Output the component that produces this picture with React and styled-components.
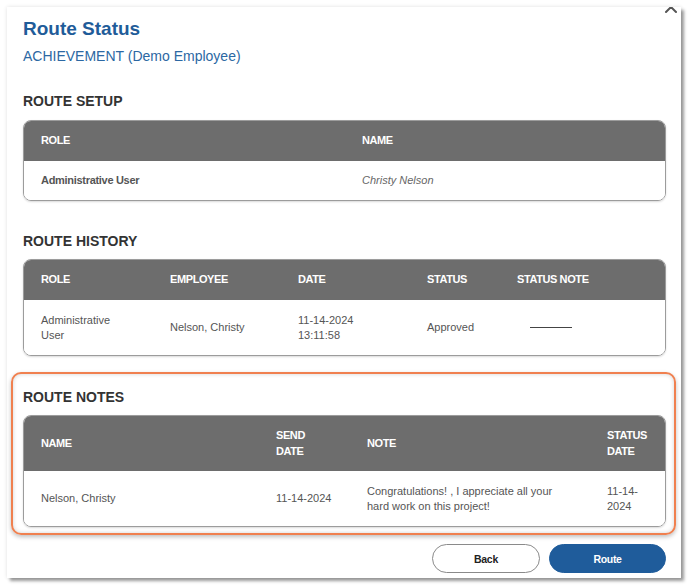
import styled, { createGlobalStyle } from "styled-components";

const Global = createGlobalStyle`
  body {
    margin: 0;
    background: #ffffff;
    font-family: "Liberation Sans", Arial, sans-serif;
  }
`;

const Page = styled.div`
  padding: 7px;
`;

const Modal = styled.div`
  position: relative;
  width: 674px;
  box-sizing: border-box;
  background: #fff;
  overflow: hidden;
  padding: 10px 15px 5px 16px;
  box-shadow: 3px 3px 3px rgba(0, 0, 0, 0.38), 0 0 4px rgba(0, 0, 0, 0.12);
  display: flex;
  flex-direction: column;
`;

const Close = styled.button`
  position: absolute;
  top: -7px;
  right: 3px;
  width: 14px;
  height: 14px;
  padding: 0;
  border: none;
  background: none;
  svg {
    display: block;
  }
`;

const Title = styled.h1`
  margin: 0;
  font-size: 19px;
  line-height: 24px;
  font-weight: bold;
  color: #1f5c99;
`;

const Subtitle = styled.div`
  margin-top: 6px;
  font-size: 14px;
  line-height: 18px;
  color: #2c68a3;
`;

const SectionHead = styled.h2`
  margin: ${({ $top }) => $top}px 0 0 0;
  font-size: 14px;
  line-height: 18px;
  font-weight: bold;
  color: #333;
`;

const Highlight = styled.div`
  margin: 16px -10px 0 -12px;
  padding: 0 8px 6px 10px;
  border: 2px solid #f0804f;
  border-radius: 10px;
  box-shadow: 0 2px 4px rgba(0, 0, 0, 0.25), inset 0 0 4px rgba(0, 0, 0, 0.18);
`;

const Table = styled.div`
  margin-top: ${({ $top }) => $top}px;
  border: 1px solid #9c9c9c;
  border-radius: 8px;
  overflow: hidden;
  box-shadow: 0 1px 2px rgba(0, 0, 0, 0.15);
`;

const Row = styled.div`
  display: grid;
  grid-template-columns: ${({ $cols }) => $cols};
  height: ${({ $h }) => $h}px;
  align-items: center;
  background: ${({ $head }) => ($head ? "#6d6d6d" : "#fff")};
  color: ${({ $head }) => ($head ? "#fff" : "#555")};
  font-size: 11px;
  line-height: ${({ $head }) => ($head ? 16 : 15)}px;
  font-weight: ${({ $head }) => ($head ? "bold" : "normal")};
  letter-spacing: ${({ $head }) => ($head ? "-0.4px" : "0")};
  padding-bottom: ${({ $head }) => ($head ? 2 : 0)}px;
  box-sizing: border-box;
`;

const Cell = styled.div`
  padding: 0 18px 0 17px;
  font-weight: ${({ $bold }) => ($bold ? "bold" : "inherit")};
  font-style: ${({ $italic }) => ($italic ? "italic" : "normal")};
  color: ${({ $italic }) => ($italic ? "#666" : "inherit")};
  letter-spacing: ${({ $bold }) => ($bold ? "-0.3px" : "inherit")};
`;

const Dash = styled.span`
  display: block;
  width: 42px;
  margin-left: 13px;
  border-top: 1px solid #444;
`;

const Footer = styled.div`
  display: flex;
  justify-content: flex-end;
  gap: 9px;
  margin-top: 9px;
`;

const Button = styled.button`
  width: ${({ $w }) => $w}px;
  height: 29px;
  border-radius: 15px;
  font-family: "Liberation Sans", Arial, sans-serif;
  font-size: 10.5px;
  font-weight: bold;
  letter-spacing: -0.3px;
  cursor: pointer;
  border: 1px solid ${({ $primary }) => ($primary ? "#1f5c9b" : "#8a8a8a")};
  background: ${({ $primary }) => ($primary ? "#1f5c9b" : "#fff")};
  color: ${({ $primary }) => ($primary ? "#fff" : "#222")};
`;

const setupCols = "321px 320px";
const historyCols = "129px 128px 129px 90px 165px";
const notesCols = "235px 91px 240px 75px";

export default function App() {
  return (
    <Page>
      <Global />
      <Modal>
        <Close aria-label="Close">
          <svg width="14" height="14" viewBox="0 0 14 14">
            <path d="M2 2 L12 12 M12 2 L2 12" stroke="#555" strokeWidth="2" strokeLinecap="round" />
          </svg>
        </Close>
        <Title>Route Status</Title>
        <Subtitle>ACHIEVEMENT (Demo Employee)</Subtitle>

        <SectionHead $top={27}>ROUTE SETUP</SectionHead>
        <Table $top={10}>
          <Row $head $cols={setupCols} $h={40}>
            <Cell>ROLE</Cell>
            <Cell>NAME</Cell>
          </Row>
          <Row $cols={setupCols} $h={39}>
            <Cell $bold>Administrative User</Cell>
            <Cell $italic>Christy Nelson</Cell>
          </Row>
        </Table>

        <SectionHead $top={31}>ROUTE HISTORY</SectionHead>
        <Table $top={9}>
          <Row $head $cols={historyCols} $h={40}>
            <Cell>ROLE</Cell>
            <Cell>EMPLOYEE</Cell>
            <Cell>DATE</Cell>
            <Cell>STATUS</Cell>
            <Cell>STATUS NOTE</Cell>
          </Row>
          <Row $cols={historyCols} $h={55}>
            <Cell>Administrative User</Cell>
            <Cell>Nelson, Christy</Cell>
            <Cell>11-14-2024 13:11:58</Cell>
            <Cell>Approved</Cell>
            <Cell>
              <Dash />
            </Cell>
          </Row>
        </Table>

        <Highlight>
          <SectionHead $top={14}>ROUTE NOTES</SectionHead>
          <Table $top={9}>
            <Row $head $cols={notesCols} $h={55}>
              <Cell>NAME</Cell>
              <Cell>SEND DATE</Cell>
              <Cell>NOTE</Cell>
              <Cell>STATUS DATE</Cell>
            </Row>
            <Row $cols={notesCols} $h={55}>
              <Cell>Nelson, Christy</Cell>
              <Cell>11-14-2024</Cell>
              <Cell>Congratulations! , I appreciate all your hard work on this project!</Cell>
              <Cell>
                11-14-
                <br />
                2024
              </Cell>
            </Row>
          </Table>
        </Highlight>

        <Footer>
          <Button $w={108}>Back</Button>
          <Button $primary $w={117}>Route</Button>
        </Footer>
      </Modal>
    </Page>
  );
}
